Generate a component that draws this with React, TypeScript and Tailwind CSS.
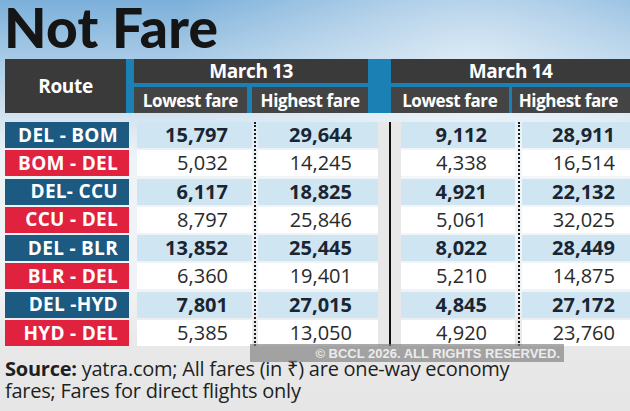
import React from 'react';

type Row = { route: string; red: boolean; bold: boolean; f: [string, string, string, string] };

const rows: Row[] = [
  { route: 'DEL - BOM', red: false, bold: true, f: ['15,797', '29,644', '9,112', '28,911'] },
  { route: 'BOM - DEL', red: true, bold: false, f: ['5,032', '14,245', '4,338', '16,514'] },
  { route: 'DEL- CCU', red: false, bold: true, f: ['6,117', '18,825', '4,921', '22,132'] },
  { route: 'CCU - DEL', red: true, bold: false, f: ['8,797', '25,846', '5,061', '32,025'] },
  { route: 'DEL - BLR', red: false, bold: true, f: ['13,852', '25,445', '8,022', '28,449'] },
  { route: 'BLR - DEL', red: true, bold: false, f: ['6,360', '19,401', '5,210', '14,875'] },
  { route: 'DEL -HYD', red: false, bold: true, f: ['7,801', '27,015', '4,845', '27,172'] },
  { route: 'HYD - DEL', red: true, bold: false, f: ['5,385', '13,050', '4,920', '23,760'] },
];

const font = { fontFamily: '"Open Sans", "Noto Sans", sans-serif' };

function FareCol({ idx, width, pad }: { idx: number; width: string; pad: string }) {
  return (
    <div className={`${width} flex flex-col gap-[2.3px]`}>
      {rows.map((r, i) => (
        <div
          key={i}
          className={`h-[26px] flex items-center justify-end ${pad} text-[20px] leading-none ${
            r.bold ? 'bg-[#cfe5f2] font-bold text-[#1a2531]' : 'bg-white font-normal text-[#2a2a2a]'
          }`}
        >
          {r.f[idx]}
        </div>
      ))}
    </div>
  );
}

function Dotted({ width }: { width: string }) {
  return (
    <div className={`${width} flex justify-center`}>
      <div className="h-full border-l-2 border-dotted border-[#1d1d1d]" />
    </div>
  );
}

function SubHead({ children, width }: { children: string; width: string }) {
  return (
    <div className={`${width} h-full bg-[#454444] flex items-center justify-center text-white font-bold text-[17px] tracking-[-0.4px] leading-none`}>
      {children}
    </div>
  );
}

export default function App() {
  return (
    <div
      className="w-[630px] h-[411px] overflow-hidden relative bg-[linear-gradient(180deg,#7cb0da_0%,#a7cae6_14%,#d2e3f0_28%,#eef3f7_38%,#f1f3f5_70%,#e8e8e8_84%,#e6e6e6_100%)]"
      style={font}
    >
      <div className="absolute inset-0 bg-[radial-gradient(ellipse_at_75%_15%,rgba(255,255,255,0.6),rgba(255,255,255,0)_45%)]" />
      <div className="relative">
        <h1
          className="pl-[4px] h-[59px] text-[55px] leading-[50px] pt-[2px] font-black text-[#151515] tracking-[0.3px]"
          style={{ fontFamily: 'Lato, "Open Sans", sans-serif' }}
        >
          Not Fare
        </h1>

        {/* header */}
        <div className="ml-[5px] h-[54px] flex bg-[#1b80b4]">
          <div className="w-[124px] h-full bg-[#3b3a3a] flex items-center justify-center text-white font-bold text-[19px] tracking-[-0.3px]">
            Route
          </div>
          <div className="w-[8px]" />
          <div className="w-[240px] flex flex-col gap-[4px]">
            <div className="h-[24px] bg-[#3b3a3a] flex items-center justify-center text-white font-bold text-[19px] tracking-[-0.4px] leading-none">
              March 13
            </div>
            <div className="flex-1 flex gap-[5px]">
              <SubHead width="w-[113px]">Lowest fare</SubHead>
              <SubHead width="flex-1">Highest fare</SubHead>
            </div>
          </div>
          <div className="w-[23px]" />
          <div className="w-[245px] flex flex-col gap-[4px]">
            <div className="h-[24px] bg-[#3b3a3a] flex items-center text-white font-bold text-[19px] tracking-[-0.4px] leading-none pl-[78px]">
              March 14
            </div>
            <div className="flex-1 flex gap-[3px]">
              <SubHead width="w-[118px]">Lowest fare</SubHead>
              <div className="flex-1 h-full bg-[#454444] flex items-center pl-[7px] text-white font-bold text-[17px] tracking-[-0.4px] leading-none whitespace-nowrap">
                Highest fare
              </div>
            </div>
          </div>
        </div>

        {/* body */}
        <div className="ml-[5px] mt-[9px] flex">
          <div className="w-[124px] flex flex-col gap-[2.3px]">
            {rows.map((r, i) => (
              <div
                key={i}
                className={`h-[26px] flex items-center justify-end pr-[11px] text-white font-bold text-[19px] leading-none tracking-[0.3px] whitespace-pre ${
                  r.red ? 'bg-[#e0223f]' : 'bg-[#1c5a82]'
                }`}
              >
                {r.route}
              </div>
            ))}
          </div>
          <div className="w-[8px]" />
          <FareCol idx={0} width="w-[115px]" pad="pr-[24px]" />
          <Dotted width="w-[6px]" />
          <FareCol idx={1} width="w-[120px]" pad="pr-[26px]" />
          <div className="w-[23px] bg-[#e8e8e8] flex justify-center">
            <div className="w-[2px] h-full bg-[#111]" />
          </div>
          <FareCol idx={2} width="w-[114px]" pad="pr-[28px]" />
          <Dotted width="w-[7px]" />
          <FareCol idx={3} width="flex-1" pad="pr-[15px]" />
        </div>

        {/* source */}
        <p className="pl-[5px] mt-[12px] text-[20px] leading-[22px] text-[#1f1f1f] tracking-[-0.25px]">
          <span className="font-bold">Source:</span> yatra.com; All fares (in ₹) are one-way economy
          <br />
          fares; Fares for direct flights only
        </p>
      </div>

      <div
        className="absolute left-[250px] top-[344px] w-[314px] h-[18px] bg-[rgba(125,125,125,0.65)] flex items-center justify-end pr-[4px] text-[#ececec] font-bold text-[13px] leading-none"
        style={{ fontFamily: '"Liberation Sans", Arial, sans-serif' }}
      >
        © BCCL 2026. ALL RIGHTS RESERVED.
      </div>
    </div>
  );
}
